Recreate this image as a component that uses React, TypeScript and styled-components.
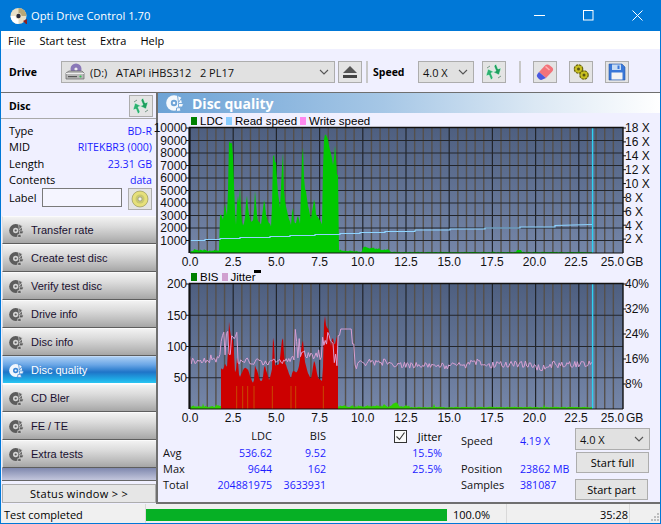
import React from "react";
import styled, { createGlobalStyle } from "styled-components";

const Global = createGlobalStyle`
  html, body { margin: 0; padding: 0; background: #f0f0ff; overflow: hidden; }
  * { box-sizing: border-box; }
`;

const UI = `"Open Sans", "Noto Sans", "Liberation Sans", sans-serif`;
const ARIAL = `"Liberation Sans", Arial, sans-serif`;

const Window = styled.div`
  width: 661px; height: 524px; display: flex; flex-direction: column;
  border: 1px solid #0078d7; border-top: 0; font: 11px ${UI}; color: #000; background: #f0f0ff;
`;
const TitleBar = styled.div`
  height: 31px; background: #0078d7; color: #fff; display: flex; align-items: center;
  padding-left: 9px; font-size: 11.2px; gap: 3px; flex: none;
`;
const TitleText = styled.span`flex: 1; padding-bottom: 1px;`;
const WinBtn = styled.div`width: 46px; height: 31px; display: flex; align-items: center; justify-content: center; flex: none;`;
const MenuBar = styled.div`height: 18px; background: #fff; display: flex; padding-left: 7px; gap: 14px; align-items: center; flex: none; font-size: 11px;`;
const Toolbar = styled.div`height: 44px; display: flex; align-items: center; padding: 3px 0 0 8px; flex: none; background: #f0f0ff; border-bottom: 1px solid #6f6f6f;`;
const BoldLabel = styled.span<{ $w: number }>`font-weight: 700; font-size: 10.5px; width: ${p => p.$w}px; flex: none;`;
const Combo = styled.div<{ $w: number; $h?: number }>`
  width: ${p => p.$w}px; height: ${p => p.$h ?? 22}px; background: #e1e1e1; border: 1px solid #adadad; flex: none;
  display: flex; align-items: center; padding: 0 5px 0 3px; gap: 4px; font-size: 11px; color: #111;
`;
const ComboText = styled.span`flex: 1; white-space: pre; padding-left: 1px;`;
const ToolBtn = styled.div<{ $ml?: number; $w?: number; $h?: number }>`
  width: ${p => p.$w ?? 24}px; height: ${p => p.$h ?? 22}px; margin-left: ${p => p.$ml ?? 0}px; flex: none;
  background: #e4e4e4; border: 1px solid #adadad; display: flex; align-items: center; justify-content: center;
`;
const ToolSep = styled.div<{ $ml: number; $mr: number }>`width: 2px; height: 22px; background: #c8c8c8; margin: 0 ${p => p.$mr}px 0 ${p => p.$ml}px; flex: none;`;
const Body = styled.div`flex: 1; display: flex; min-height: 0;`;
const Sidebar = styled.div`width: 155px; flex: none; display: flex; flex-direction: column; background: #f0f0ff;`;
const DiscHead = styled.div`height: 26px; display: flex; align-items: center; justify-content: space-between; padding: 1px 3px 0 8px; font-weight: 700; font-size: 10.5px; border-bottom: 1px solid #a9a9a9; flex: none;`;
const InfoRows = styled.div`display: flex; flex-direction: column; padding: 4px 4px 0 8px; height: 97px; flex: none;`;
const InfoRow = styled.div`height: 16.3px; display: flex; justify-content: space-between; align-items: center; line-height: 16px; flex: none;`;
const Blue = styled.span`color: #1c1cff; font-size: 10.6px;`;
const LabelRow = styled.div`display: flex; align-items: flex-start; height: 23px; line-height: 19px;`;
const LabelInput = styled.div`width: 80px; height: 19px; margin-left: 5px; background: #f5f5ff; border: 1px solid #7a7a7a;`;
const NavList = styled.div`display: flex; flex-direction: column; padding-left: 1px; flex: none;`;
const NavButton = styled.div<{ $active?: boolean }>`
  height: 28px; width: 154px; display: flex; align-items: center; padding-left: 6px; gap: 7px; font: 11px ${ARIAL};
  border-top: 1px solid ${p => (p.$active ? "#c4dcf8" : "#fbfbfb")}; border-bottom: 1px solid ${p => (p.$active ? "#fff" : "#5e5e5e")};
  border-left: 1px solid ${p => (p.$active ? "#d0e4f8" : "#e0e0e0")};
  color: ${p => (p.$active ? "#fff" : "#1a1030")};
  background: ${p => p.$active
    ? "linear-gradient(#a9cdf4 0%, #6aa6e6 30%, #1f74c8 58%, #1fa8e4 85%, #2ac6f2 100%)"
    : "linear-gradient(#f2f2f2 0%, #dcdcdc 35%, #bcbcbc 75%, #a6a6a6 100%)"};
`;
const NavFill = styled.div`height: 13px; margin-left: 1px; background: linear-gradient(#7f88ae, #c3c6dc); flex: none; border-bottom: 1px solid #666;`;
const StatusWin = styled.div`height: 19px; margin: 3px 0 0 1px; width: 154px; background: #e6e6e6; border: 1px solid #adadad; display: flex; align-items: center; justify-content: center; letter-spacing: 0.3px; flex: none;`;
const Main = styled.div`flex: 1; display: flex; flex-direction: column; border-left: 2px solid #6f6f6f; border-bottom: 2px solid #6f6f6f; min-width: 0; height: 411px;`;
const PanelHead = styled.div`
  height: 20px; flex: none; display: flex; align-items: center; gap: 8px; padding-left: 8px; color: #fff; font: 700 14px ${UI};
  background: linear-gradient(90deg, #6da3d6 0%, #a6c7e6 45%, #dbe8f4 75%, #ffffff 100%);
`;
const Legend = styled.div<{ $h: number }>`
  height: ${p => p.$h}px; flex: none; display: flex; align-items: center; padding-left: 33px; font: 11.5px ${ARIAL}; gap: 3px; position: relative;
`;
const Swatch = styled.i<{ $c: string }>`width: 6px; height: 8px; background: ${p => p.$c}; display: block; flex: none;`;
const LegendItem = styled.span`display: inline-flex; align-items: center; gap: 3px;`;
const Mark = styled.i`position: absolute; left: 96px; top: 0; width: 7px; height: 3px; background: #000;`;
const ChartSvg = styled.svg`display: block; flex: none; overflow: visible; font: 12px ${ARIAL};`;
const Stats = styled.div`flex: 1; display: flex; min-height: 0; font-size: 11px;`;
const StatTable = styled.div`
  display: grid; grid-template-columns: 43px 66px 54px; grid-template-rows: 17px 16px 16px 16px; padding: 3px 0 0 5px; width: 236px; flex: none; align-content: start;
`;
const Cell = styled.div<{ $blue?: boolean; $right?: boolean }>`
  color: ${p => (p.$blue ? "#1c1cff" : "#111")}; text-align: ${p => (p.$right ? "right" : "left")}; line-height: 16px; white-space: nowrap;
  font-size: ${p => (p.$blue ? "10.6px" : "11px")};
`;
const JitterCol = styled.div`width: 48px; flex: none; display: grid; grid-template-rows: 17px 16px 16px; padding-top: 3px; margin-right: 19px; align-content: start;`;
const CheckRow = styled.div`display: flex; align-items: center; justify-content: space-between;`;
const CheckBox = styled.div`width: 13px; height: 13px; border: 1px solid #333; background: #fafafa; display: flex; align-items: center; justify-content: center;`;
const InfoCol = styled.div`width: 114px; flex: none; display: grid; grid-template-columns: 59px 1fr; grid-template-rows: 28px 16px 16px; padding-top: 8px; align-content: start;`;
const BtnCol = styled.div`display: flex; flex-direction: column; align-items: flex-start; padding-top: 3px; gap: 2px;`;
const ActionBtn = styled.div<{ $mt?: number; $ml?: number }>`
  width: 73px; height: 21px; margin: ${p => p.$mt ?? 0}px 0 0 ${p => p.$ml ?? 0}px; background: #e4e4e4; border: 1px solid #adadad; display: flex; align-items: center; justify-content: center;
`;
const StatusBar = styled.div`height: 19px; flex: none; background: #f0f0f0; display: flex; align-items: center; font-size: 11px;`;
const StatusCell = styled.div<{ $w: number; $right?: boolean; $pl?: number }>`
  width: ${p => p.$w}px; height: 100%; flex: none; display: flex; align-items: center; padding: 2px 1px 0 ${p => p.$pl ?? 3}px;
  justify-content: ${p => (p.$right ? "flex-end" : "flex-start")}; border-right: 1px solid #d9d9d9;
`;
const Progress = styled.div`width: 301px; height: 12px; background: #06b025; margin-top: 2px; flex: none;`;
const Grip = styled.div`flex: 1; height: 100%; display: flex; align-items: flex-end; justify-content: flex-end;`;

const Arrows = () => (
  <svg width="18" height="18" viewBox="0 0 18 18">
    <path d="M6 17l-2-5-3 1 2-7 6 3-3 1 2 5z" fill="#2cb070" stroke="#e8fff0" strokeWidth=".5" />
    <path d="M11 1l2 5 3-1-2 7-6-3 3-1-2-5z" fill="#1fa060" stroke="#e8fff0" strokeWidth=".5" />
    <path d="M2 5l3-2M16 13l-3 2" stroke="#7a9a8a" strokeWidth="1" />
  </svg>
);
const Disc = ({ c = "#5c5c5c", hub = "#d4d4d4", size = 15 }: { c?: string; hub?: string; size?: number }) => (
  <svg width={size} height={size} viewBox="0 0 18 18">
    <circle cx="8" cy="9" r="7.8" fill={c} />
    <circle cx="8" cy="9" r="3.2" fill={hub} />
    <circle cx="8" cy="9" r="1.3" fill={c} />
    <path d="M11.500 1.500l4.500 2-3.500 5zM12.500 9.500h5l-1 3.500h-4zM10.500 14l3.500-.5 1 3.500-4.500.5z" fill={c} stroke={hub} strokeWidth=".9" />
  </svg>
);
const Chevron = ({ c = "#555" }: { c?: string }) => (
  <svg width="10" height="6" viewBox="0 0 10 6"><path d="M1 1l4 4 4-4" fill="none" stroke={c} strokeWidth="1.1" /></svg>
);

/* deterministic noise so that both charts stay stable between renders */
function rng(seed: number) {
  let s = seed;
  return () => { s = (s * 16807) % 2147483647; return s / 2147483647; };
}

const PLOT_W = 433, PLOT_H = 125;
const X0 = 32; // plot left inside the chart svg
const MAJOR = [43.2, 86.4, 129.6, 172.8, 216, 259.2, 302.4, 345.6, 388.8];
const MINOR = Array.from({ length: 50 }, (_, i) => i * 8.64).filter((_, i) => i % 5 !== 0);
const XLABELS: [string, number][] = [["0.0", 0], ["2.5", 43.2], ["5.0", 86.4], ["7.5", 129.6], ["10.0", 172.8], ["12.5", 216], ["15.0", 259.2], ["17.5", 302], ["20.0", 344.5], ["22.5", 386], ["25.0", 422.5]];

const LDC: [number, number][] = [[190,375],[197,368],[200,395],[208,330],[212,385],[215,350],[219,150],[224,160],[229,155],[232,220],[236,340],[240,405],[245,295],[248,350],[252,290],[256,380],[260,405],[266,395],[272,305],[276,350],[280,380],[285,395],[292,390],[297,300],[301,350],[305,390],[315,400],[325,320],[330,370],[335,390],[345,405],[349,330],[352,130],[355,220],[360,215],[365,300],[372,350],[378,230],[380,150],[384,300],[388,340],[395,370],[405,405],[410,340],[415,400],[420,395],[425,370],[432,400],[438,200],[441,170],[445,290],[450,300],[455,340],[465,385],[470,350],[475,320],[480,370],[490,385],[498,400],[502,180],[505,130],[510,135],[516,145],[520,170],[526,190],[532,230],[538,150],[542,250],[545,250],[547,250]];
const RED: [number, number][] = [[195,310],[203,310],[206,295],[214,305],[219,170],[224,210],[232,225],[238,340],[244,260],[250,340],[262,310],[270,305],[278,315],[285,340],[293,355],[297,300],[305,320],[312,345],[320,345],[325,295],[332,320],[340,345],[348,310],[352,185],[357,300],[370,295],[380,205],[386,290],[395,310],[405,340],[410,315],[420,320],[428,310],[440,215],[447,290],[455,320],[465,340],[475,280],[485,335],[495,345],[500,345],[505,130],[510,180],[518,190],[525,240],[530,210],[535,240],[543,210],[545,260]];

function interp(pts: [number, number][], x: number) {
  for (let i = 0; i < pts.length - 1; i++) {
    if (x >= pts[i][0] && x <= pts[i + 1][0]) {
      const t = (x - pts[i][0]) / (pts[i + 1][0] - pts[i][0] || 1);
      return pts[i][1] + (pts[i + 1][1] - pts[i][1]) * t;
    }
  }
  return pts[pts.length - 1][1];
}

function ldcPath() {
  const r = rng(77);
  let d = `M0 ${PLOT_H}`;
  for (let px = 0; px <= 402; px++) {
    let y: number;
    const gb = px / 17.28;
    const zoomX = (px + 190 - 156) * 3;
    if (zoomX >= 190 && zoomX < 547) {
      const base = interp(LDC, zoomX);
      y = Math.min(90 + base / 3 - 128 + r() * 1.5, 96 + r() * 4);
    } else {
      let h = 1 + r() * 1.6;
      if (gb < 1.7) h = 1.5 + r() * 3.2 * (gb > 0.2 ? 0.7 : 0.2);
      if (gb > 8.6 && gb < 10) h = 2 - (gb - 8.6) + r() * 1.5;
      if (gb >= 10 && gb < 11.6) h = 5 - (gb - 10) * 2.2 + r() * 2;
      if (gb > 11.6) h = 0.5 + r() * 0.8;
      if (px > 326 && px < 332) h = 3;
      y = PLOT_H - Math.max(h, 0.5);
    }
    d += `L${px} ${y.toFixed(1)}`;
  }
  return d + `L402 ${PLOT_H}Z`;
}

function redPath() {
  const r = rng(901);
  let d = "";
  let first = true;
  for (let px = 31; px <= 148; px += 1) {
    const z = (px + 190 - 156) * 3;
    const y = 265 + interp(RED, z) / 3 - 284 + r() * 1.5;
    d += `${first ? "M" : "L"}${px} ${y.toFixed(1)}`;
    first = false;
  }
  return d + `L148 ${PLOT_H}L31 ${PLOT_H}Z`;
}

function jitterPath() {
  const r = rng(4242);
  const pts: string[] = [];
  for (let px = 0; px <= 402; px += 1.3) {
    let y: number;
    if (px < 29) y = 72 + r() * 8 - px * 0.06;
    else if (px < 36) y = 45 + r() * 28;
    else if (px < 49) y = r() > 0.5 ? 45 + r() * 10 : 65 + r() * 15;
    else if (px < 100) y = 74 + r() * 7;
    else if (px < 112) y = r() > 0.6 ? 44 + r() * 30 : 72 + r() * 8;
    else if (px < 120) y = 65 + r() * 14;
    else if (px >= 120 && px < 132) y = 62 + r() * 14;
    else if (px < 150) y = r() > 0.5 ? 48 + r() * 12 : 60 + r() * 22;
    else if (px < 162) y = 45;
    else if (px < 164) y = 60;
    else if (px < 200) y = 75 + r() * 7 + (px < 167 ? 3 : 0);
    else if (px < 290) y = 78 + r() * 7 - (px > 280 ? 3 : 0);
    else y = 77 + r() * 7 + (px > 345 && px < 360 ? 3 : 0);
    pts.push(`${px.toFixed(1)},${Math.max(45, y).toFixed(1)}`);
  }
  return pts.join(" ");
}

function binPath() {
  const r = rng(31337);
  let d = `M0 ${PLOT_H}`;
  for (let px = 0; px <= 402; px += 1) {
    let h = 1.5 + r() * 1.8;
    if (px < 4) h = 1 + r() * 3;
    if (px > 25 && px < 31) h = 3 + r() * 2;
    if (px >= 148 && px < 220) h = 1.5 + r() * 2.5;
    if (px >= 220) h = 1.5 + r() * 0.8;
    if (r() > 0.985) h += 3;
    if (px > 202 && px < 209) h = 4 + r() * 3;
    d += `L${px} ${(PLOT_H - h).toFixed(1)}`;
  }
  return d + `L402 ${PLOT_H}Z`;
}

const READ = "0,125 0,112.5 15,112.5 15,111.5 30,111.5 30,110.5 50,110.5 50,109.5 80,109.5 80,108.5 100,108.5 100,107.5 125,107.5 125,106.5 150,106.5 150,105.5 170,105.5 170,104.5 195,104.5 195,103.5 225,103.5 225,102 260,102 260,101 295,101 295,100 330,100 330,99 365,99 365,97.5 402,96.5";
const ORANGE = [240, 258, 273, 292, 347, 403, 417, 500];

interface ChartProps { id: string; yLabels: [string, number][]; rightLabels: [string, number][]; hLines: number[]; height: number; children: React.ReactNode; }

const Chart = ({ id, yLabels, rightLabels, hLines, height, children }: ChartProps) => (
  <ChartSvg width="503" height={height} viewBox={`0 0 503 ${height}`}>
    <defs>
      <linearGradient id={id} x1="0" y1="0" x2="0" y2="1">
        <stop offset="0" stopColor="#4e5f80" />
        <stop offset="1" stopColor="#7586a8" />
      </linearGradient>
    </defs>
    <g transform={`translate(${X0} 0)`}>
      <rect x="0" y="0" width={PLOT_W} height={PLOT_H} fill={`url(#${id})`} />
      {MINOR.map(x => <line key={x} x1={x} x2={x} y1="0" y2={PLOT_H} stroke="#55504c" strokeWidth="1.4" />)}
      {hLines.map(y => <line key={y} x1="0" x2={PLOT_W} y1={y} y2={y} stroke="#23262c" strokeWidth="1" />)}
      {MAJOR.map(x => <line key={x} x1={x} x2={x} y1="0" y2={PLOT_H} stroke="#22252b" strokeWidth="1.2" />)}
      {children}
      <line x1="402.6" x2="402.6" y1="0" y2={PLOT_H} stroke="#2fd2f2" strokeWidth="1.4" />
      <path d={`M-.5 ${PLOT_H}V-.5H${PLOT_W}V${PLOT_H}`} fill="none" stroke="#111" strokeWidth="1.4" />
      <line x1="-.5" x2="-.5" y1="0" y2={PLOT_H} stroke="#111" strokeWidth="2" />
      <line x1="0" x2={PLOT_W} y1={PLOT_H} y2={PLOT_H} stroke="#111" strokeWidth="1" />
      {yLabels.map(([t, y]) => (
        <g key={t}>
          <line x1="-4" x2="0" y1={y} y2={y} stroke="#111" />
          <text x="-3" y={y + 4.3} textAnchor="end" fill="#111">{t}</text>
        </g>
      ))}
      {rightLabels.map(([t, y]) => (
        <g key={t}>
          <line x1={PLOT_W} x2={PLOT_W + 3} y1={y} y2={y} stroke="#111" />
          <text x={PLOT_W + 2} y={y + 4.3} fill="#111">{t}</text>
        </g>
      ))}
      {XLABELS.map(([t, x]) => (
        <text key={t} x={x} y={PLOT_H + 13} textAnchor="middle" fill="#111">{t}</text>
      ))}
      <text x={PLOT_W + 3} y={PLOT_H + 13} fill="#111">GB</text>
    </g>
  </ChartSvg>
);

const navItems = ["Transfer rate", "Create test disc", "Verify test disc", "Drive info", "Disc info", "Disc quality", "CD Bler", "FE / TE", "Extra tests"];
const info: [string, string][] = [["Type", "BD-R"], ["MID", "RITEKBR3 (000)"], ["Length", "23.31 GB"], ["Contents", "data"]];
const table: [string, string, string][] = [["Avg", "536.62", "9.52"], ["Max", "9644", "162"], ["Total", "204881975", "3633931"]];

export default function App() {
  return (
    <Window>
      <Global />
      <TitleBar>
        <svg width="18" height="18" viewBox="0 0 18 18">
          <circle cx="8.500" cy="9" r="8" fill="#e8e0c8" />
          <path d="M8.500 1a8 8 0 0 1 8 8l-5 0a3 3 0 0 0-3-3z" fill="#b8a878" />
          <path d="M8.500 17a8 8 0 0 1-8-8l5 0a3 3 0 0 0 3 3z" fill="#fff" />
          <circle cx="8.500" cy="9" r="2.200" fill="#2a2a3a" />
          <path d="M13 14l3 3h1v-5z" fill="#8a2020" />
        </svg>
        <TitleText>Opti Drive Control 1.70</TitleText>
        <WinBtn><svg width="11" height="11" viewBox="0 0 11 11"><path d="M0 5.500h11" stroke="#fff" /></svg></WinBtn>
        <WinBtn><svg width="11" height="11" viewBox="0 0 11 11"><rect x=".5" y=".5" width="9.500" height="9.500" fill="none" stroke="#fff" /></svg></WinBtn>
        <WinBtn><svg width="11" height="11" viewBox="0 0 11 11"><path d="M.5.5l10 10M10.500.5l-10 10" stroke="#fff" /></svg></WinBtn>
      </TitleBar>
      <MenuBar><span>File</span><span>Start test</span><span>Extra</span><span>Help</span></MenuBar>
      <Toolbar>
        <BoldLabel $w={52}>Drive</BoldLabel>
        <Combo $w={274}>
          <svg width="20" height="18" viewBox="0 0 20 18">
            <circle cx="11" cy="6" r="5.500" fill="#8a78b8" /><circle cx="11" cy="6" r="1.600" fill="#eee" />
            <path d="M1 10l3-2h13l2 2v6H1z" fill="#b8b8b8" stroke="#666" strokeWidth=".7" />
            <path d="M1 10.500h18" stroke="#eee" /><rect x="3" y="13" width="9" height="1.200" fill="#555" /><circle cx="15.500" cy="13.500" r="1.100" fill="#30c050" />
          </svg>
          <ComboText>(D:)   ATAPI iHBS312   2 PL17</ComboText>
          <Chevron />
        </Combo>
        <ToolBtn $ml={3}>
          <svg width="16" height="14" viewBox="0 0 16 14"><path d="M8 1l7 7H1z" fill="#555" /><rect x="1" y="10" width="14" height="3" fill="#444" /></svg>
        </ToolBtn>
        <ToolSep $ml={4} $mr={5} />
        <BoldLabel $w={45}>Speed</BoldLabel>
        <Combo $w={56}><ComboText>4.0 X</ComboText><Chevron /></Combo>
        <ToolBtn $ml={8}><Arrows /></ToolBtn>
        <ToolSep $ml={13} $mr={12} />
        <ToolBtn>
          <svg width="18" height="18" viewBox="0 0 18 18">
            <path d="M3 9l6-6.500a3 3 0 0 1 4.500-.2l2.500 2a3 3 0 0 1 .2 4.200L10 15z" fill="#f2737a" />
            <path d="M3 9l-1.500 2a3 3 0 0 0 .5 4l1 1a3 3 0 0 0 4 .2L10 15z" fill="#4a58e0" />
            <path d="M9.500 3.500l4 3.500" stroke="#ffb4b4" strokeWidth="1.500" />
          </svg>
        </ToolBtn>
        <ToolBtn $ml={12}>
          <svg width="18" height="18" viewBox="0 0 18 18">
            <circle cx="6.500" cy="6" r="4.200" fill="#c8c020" stroke="#6a6410" strokeWidth="1.200" strokeDasharray="2.500 .8" />
            <circle cx="12" cy="12" r="4.200" fill="#c8c020" stroke="#6a6410" strokeWidth="1.200" strokeDasharray="2.500 .8" />
            <circle cx="6.500" cy="6" r="1.500" fill="#5a5410" /><circle cx="12" cy="12" r="1.500" fill="#5a5410" />
          </svg>
        </ToolBtn>
        <ToolBtn $ml={12}>
          <svg width="18" height="18" viewBox="0 0 18 18">
            <path d="M1 1h13l3 3v13H1z" fill="#3a78d8" stroke="#2858a8" strokeWidth=".6" />
            <rect x="4" y="1.500" width="9" height="5.500" fill="#c8dcf4" /><rect x="9.500" y="2.500" width="2" height="3.500" fill="#3a78d8" />
            <rect x="3.500" y="9.500" width="11" height="7" fill="#f4f4f4" />
          </svg>
        </ToolBtn>
      </Toolbar>
      <Body>
        <Sidebar>
          <DiscHead><span>Disc</span><ToolBtn><Arrows /></ToolBtn></DiscHead>
          <InfoRows>
            {info.map(([k, v]) => <InfoRow key={k}><span>{k}</span><Blue>{v}</Blue></InfoRow>)}
            <LabelRow>
              <span>Label</span>
              <LabelInput />
              <ToolBtn $ml={6}>
                <svg width="18" height="18" viewBox="0 0 18 18">
                  <circle cx="9" cy="9" r="8" fill="#e6e07a" stroke="#8a8a50" strokeWidth=".6" />
                  <circle cx="9" cy="9" r="4.500" fill="#c8c870" /><circle cx="9" cy="9" r="2" fill="#f4f4e0" stroke="#777" strokeWidth=".5" />
                </svg>
              </ToolBtn>
            </LabelRow>
          </InfoRows>
          <NavList>
            {navItems.map(n => (
              <NavButton key={n} $active={n === "Disc quality"}>
                {n === "Disc quality" ? <Disc c="#f2f6fc" hub="#3c86d4" /> : <Disc />}
                <span>{n}</span>
              </NavButton>
            ))}
          </NavList>
          <NavFill />
          <StatusWin>Status window &gt; &gt;</StatusWin>
        </Sidebar>
        <Main>
          <PanelHead><Disc c="#f4f8fc" hub="#6da3d6" size={18} /><span>Disc quality</span></PanelHead>
          <Legend $h={15}>
            <LegendItem><Swatch $c="#008000" />LDC</LegendItem>
            <LegendItem><Swatch $c="#88ccff" />Read speed</LegendItem>
            <LegendItem><Swatch $c="#ff88ee" />Write speed</LegendItem>
          </Legend>
          <Chart
            id="g1"
            height={142}
            yLabels={[["10000", 0], ["9000", 12.5], ["8000", 25], ["7000", 37.5], ["6000", 50], ["5000", 62.5], ["4000", 75], ["3000", 87.5], ["2000", 100], ["1000", 112.5]]}
            rightLabels={[["18 X", 0], ["16 X", 13.9], ["14 X", 27.8], ["12 X", 41.7], ["10 X", 55.6], ["8 X", 69.4], ["6 X", 83.3], ["4 X", 97.2], ["2 X", 111.1]]}
            hLines={[12.5, 25, 37.5, 50, 62.5, 75, 87.5, 100, 112.5]}
          >
            <path d={ldcPath()} fill="#00c800" />
            <polyline points={READ} fill="none" stroke="#8fd4ff" strokeWidth="1.2" />
          </Chart>
          <Legend $h={14}>
            <LegendItem><Swatch $c="#008000" />BIS</LegendItem>
            <LegendItem><Swatch $c="#d0a0d0" />Jitter</LegendItem>
            <Mark />
          </Legend>
          <Chart
            id="g2"
            height={141}
            yLabels={[["200", 0], ["150", 31.25], ["100", 62.5], ["50", 93.75]]}
            rightLabels={[["40%", 0], ["32%", 25], ["24%", 50], ["16%", 75], ["8%", 100]]}
            hLines={[31.25, 62.5, 93.75]}
          >
            <path d={binPath()} fill="#30d000" />
            <path d={redPath()} fill="#cc0000" />
            {ORANGE.map(z => {
              const x = (z - 100) / 3;
              return <line key={z} x1={x} x2={x} y1={102} y2={PLOT_H} stroke="#c84800" strokeWidth="1" />;
            })}
            <polyline points={jitterPath()} fill="none" stroke="#d8a0d4" strokeWidth="1" />
          </Chart>
          <Stats>
            <StatTable>
              <Cell /><Cell $right>LDC</Cell><Cell $right>BIS</Cell>
              {table.map(([a, b, c]) => (
                <React.Fragment key={a}>
                  <Cell>{a}</Cell><Cell $blue $right>{b}</Cell><Cell $blue $right>{c}</Cell>
                </React.Fragment>
              ))}
            </StatTable>
            <JitterCol>
              <CheckRow>
                <CheckBox><svg width="11" height="11" viewBox="0 0 11 11"><path d="M1.500 5.500l3 3 5-7" fill="none" stroke="#333" strokeWidth="1.100" /></svg></CheckBox>
                <span>Jitter</span>
              </CheckRow>
              <Cell $blue $right>15.5%</Cell>
              <Cell $blue $right>25.5%</Cell>
            </JitterCol>
            <InfoCol>
              <Cell>Speed</Cell><Cell $blue>4.19 X</Cell>
              <Cell>Position</Cell><Cell $blue>23862 MB</Cell>
              <Cell>Samples</Cell><Cell $blue>381087</Cell>
            </InfoCol>
            <BtnCol>
              <Combo $w={75}><ComboText>4.0 X</ComboText><Chevron /></Combo>
              <ActionBtn $ml={1}>Start full</ActionBtn>
              <ActionBtn $mt={4}>Start part</ActionBtn>
            </BtnCol>
          </Stats>
        </Main>
      </Body>
      <StatusBar>
        <StatusCell $w={145}>Test completed</StatusCell>
        <Progress />
        <StatusCell $w={60} $pl={6}>100.0%</StatusCell>
        <StatusCell $w={123} $right>35:28</StatusCell>
        <Grip>
          <svg width="12" height="12" viewBox="0 0 12 12">
            <path d="M9 2h2v2H9zM6 5h2v2H6zM9 5h2v2H9zM3 8h2v2H3zM6 8h2v2H6zM9 8h2v2H9z" fill="#bdbdbd" />
          </svg>
        </Grip>
      </StatusBar>
    </Window>
  );
}
